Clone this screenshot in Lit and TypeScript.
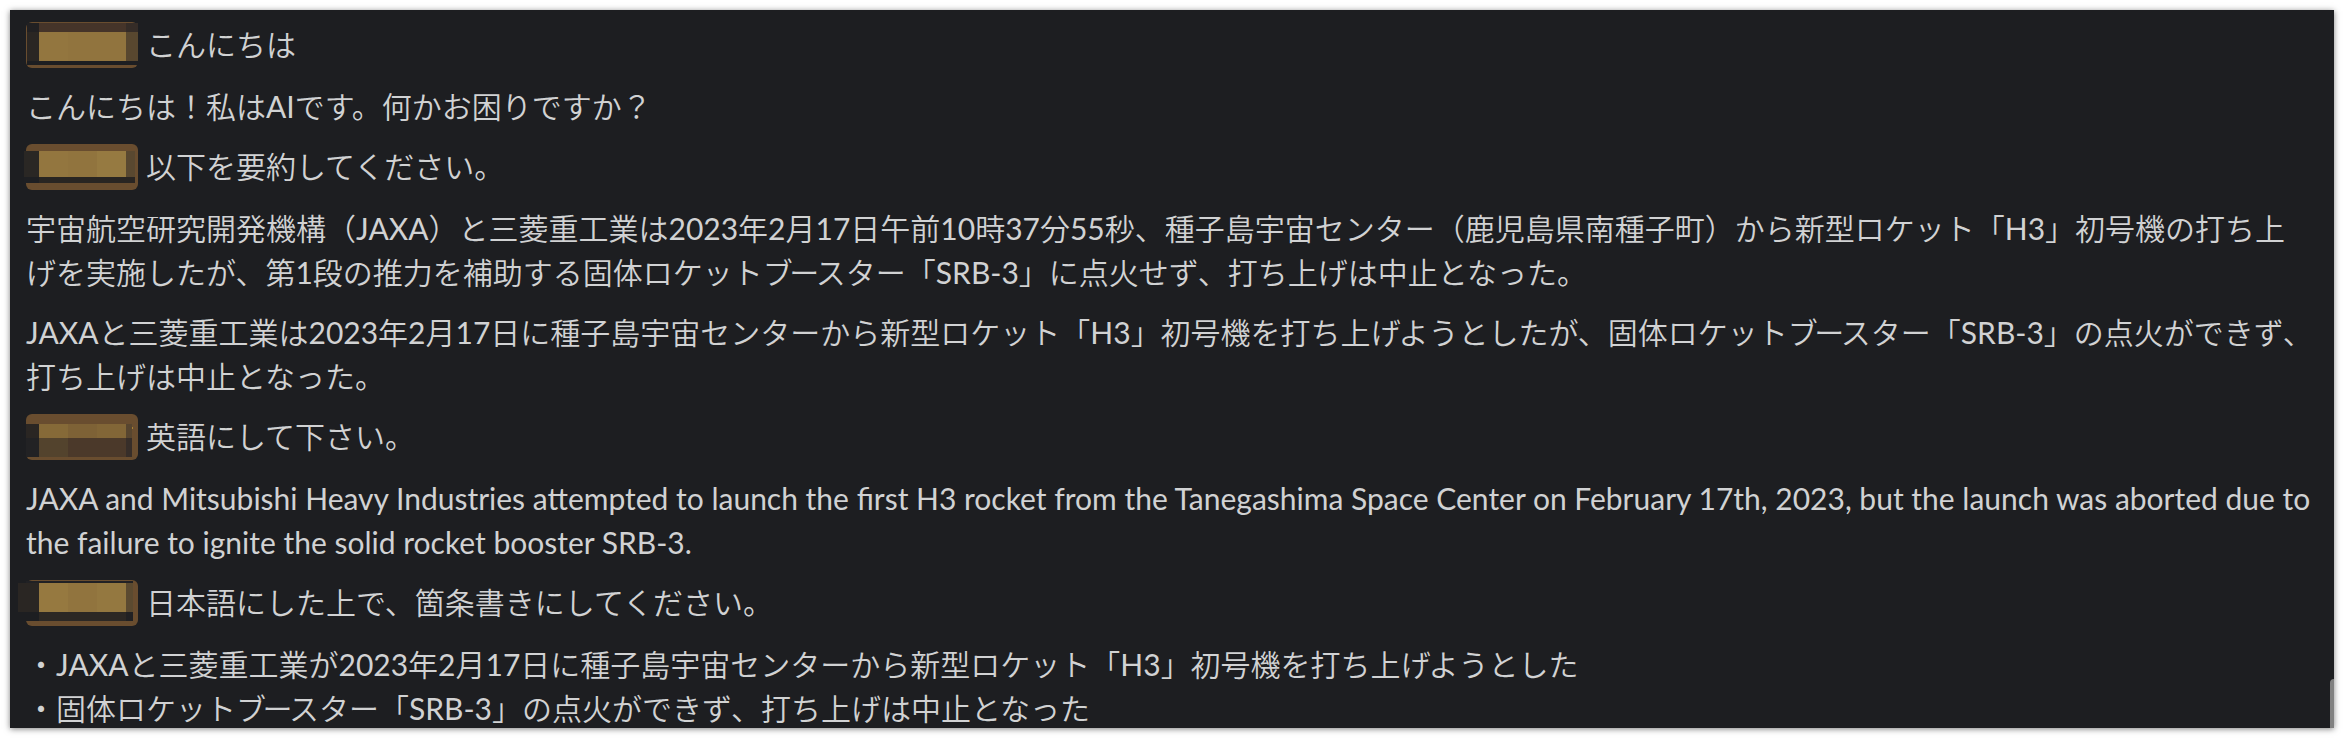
import { LitElement, html, css, svg } from "lit";
import { customElement, property } from "lit/decorators.js";

type Cell = [x: number, y: number, w: number, h: number, fill: string];

interface Message {
  mention?: Cell[];
  lines: string[];
}

const BG = "#1d1e21";
const GOLD = "#93763f";

// Pixelated user names, in the coordinates of a 112 x 46 mention chip.
const mosaicA: Cell[] = [
  [1, 1, 12, 9, "#212022"], [13, 1, 87, 9, "#453429"], [100, 1, 12, 9, "#352c27"],
  [1, 10, 12, 29, "#2a2623"], [13, 10, 29, 29, GOLD], [42, 10, 29, 29, "#91743e"],
  [71, 10, 29, 29, "#91743e"], [100, 10, 12, 29, "#58472f"], [1, 39, 111, 4, BG],
];
const mosaicB: Cell[] = [
  [-2, 7, 15, 26, "#2a2724"], [13, 7, 29, 26, GOLD], [42, 7, 29, 26, "#91743e"],
  [71, 7, 29, 26, "#967a41"], [100, 7, 9, 26, "#594830"],
  [-2, 33, 15, 6, "#1e1f22"], [13, 33, 96, 6, "#292522"],
];
const mosaicC: Cell[] = [
  [0, 10, 13, 14, "#2a2623"], [13, 10, 29, 14, "#866a38"], [42, 10, 29, 14, "#7e6236"],
  [71, 10, 29, 14, "#826637"], [100, 10, 6, 14, "#57452f"],
  [0, 24, 13, 19, "#222224"], [13, 24, 29, 19, "#53432d"], [42, 24, 58, 19, "#4b392a"],
  [100, 24, 6, 19, "#372e29"], [106, 13, 1, 2, "#a98132"],
];
const mosaicD: Cell[] = [
  [0, 1, 107, 2, "#212124"], [-8, 3, 21, 29, "#2a2623"], [13, 3, 29, 29, "#967940"],
  [42, 3, 29, 29, "#91743e"], [71, 3, 29, 29, "#947840"], [100, 3, 7, 29, "#5b4a30"],
  [-8, 32, 21, 9, BG], [13, 32, 87, 9, "#2c2824"], [100, 32, 7, 9, "#212123"],
];

const messages: Message[] = [
  { mention: mosaicA, lines: ["こんにちは"] },
  { lines: ["こんにちは！私はAIです。何かお困りですか？"] },
  { mention: mosaicB, lines: ["以下を要約してください。"] },
  {
    lines: [
      "宇宙航空研究開発機構（JAXA）と三菱重工業は2023年2月17日午前10時37分55秒、種子島宇宙センター（鹿児島県南種子町）から新型ロケット「H3」初号機の打ち上",
      "げを実施したが、第1段の推力を補助する固体ロケットブースター「SRB-3」に点火せず、打ち上げは中止となった。",
    ],
  },
  {
    lines: [
      "JAXAと三菱重工業は2023年2月17日に種子島宇宙センターから新型ロケット「H3」初号機を打ち上げようとしたが、固体ロケットブースター「SRB-3」の点火ができず、",
      "打ち上げは中止となった。",
    ],
  },
  { mention: mosaicC, lines: ["英語にして下さい。"] },
  {
    lines: [
      "JAXA and Mitsubishi Heavy Industries attempted to launch the first H3 rocket from the Tanegashima Space Center on February 17th, 2023, but the launch was aborted due to",
      "the failure to ignite the solid rocket booster SRB-3.",
    ],
  },
  { mention: mosaicD, lines: ["日本語にした上で、箇条書きにしてください。"] },
  {
    lines: [
      "・JAXAと三菱重工業が2023年2月17日に種子島宇宙センターから新型ロケット「H3」初号機を打ち上げようとした",
      "・固体ロケットブースター「SRB-3」の点火ができず、打ち上げは中止となった",
    ],
  },
];

// Splits a line into Latin and Japanese runs, and tightens the kana pairs
// that sit closer together than their full-width boxes.
function runs(line: string) {
  return line
    .split(/([^\x00-\x7f]+)/)
    .filter(Boolean)
    .map((run) =>
      run.charCodeAt(0) < 128
        ? run
        : html`<span class="ja">${run
            .split(/(ブ(?=ー)|ー(?=ス)|げ(?=よ)|ず(?=、))/)
            .filter(Boolean)
            .map((part) =>
              part === "ブ" || part === "ー"
                ? html`<span class="kern">${part}</span>`
                : part === "げ" || part === "ず"
                  ? html`<span class=${part === "げ" ? "kern-soft" : "kern-comma"}>${part}</span>`
                  : part
            )}</span>`
    );
}

@customElement("mention-chip")
class MentionChip extends LitElement {
  @property({ attribute: false }) cells: Cell[] = [];

  static styles = css`
    :host { display: block; width: 112px; height: 46px; }
    .chip { display: block; overflow: visible; }
  `;

  render() {
    return html`<svg class="chip" width="112" height="46" viewBox="0 0 112 46">
      <rect width="112" height="46" rx="6" fill="#694d2f"></rect>
      ${this.cells.map(([x, y, w, h, fill]) => svg`<rect x=${x} y=${y} width=${w} height=${h} fill=${fill} shape-rendering="crispEdges"></rect>`)}
    </svg>`;
  }
}

@customElement("app-root")
class AppRoot extends LitElement {
  static styles = css`
    :host {
      display: block;
      box-sizing: border-box;
      width: 2344px;
      height: 738px;
      padding: 10px;
      overflow: hidden;
      background: #fff;
    }
    .frame { width: 2324px; height: 718px; box-shadow: 0 1px 6px rgba(0, 0, 0, 0.5); }
    .panel {
      position: relative;
      box-sizing: border-box;
      display: flex;
      flex-direction: column;
      gap: 16px;
      height: 718px;
      padding: 12px 16px 0;
      overflow: hidden;
      background: #1d1e21;
      color: #d1d2d3;
      font: 400 30px/44px Lato, "Noto Sans CJK JP", sans-serif;
      text-spacing-trim: space-all;
    }
    .message { display: flex; flex: none; gap: 8px; }
    .line { height: 44px; white-space: nowrap; }
    .ja { font-family: "Noto Sans CJK JP", sans-serif; font-weight: 350; line-height: 1; }
    .kern { letter-spacing: -3.5px; }
    .kern-soft { letter-spacing: -2.2px; }
    .kern-comma { letter-spacing: -1px; }
    .scroll-thumb {
      position: absolute;
      right: 0;
      bottom: 0;
      width: 4px;
      height: 49px;
      border-top-left-radius: 5px;
      background: #808080;
    }
  `;

  render() {
    return html`<div class="frame"><main class="panel">
      ${messages.map((m) => html`<div class="message">
        ${m.mention ? html`<mention-chip .cells=${m.mention}></mention-chip>` : null}
        <div class="text">${m.lines.map((l) => html`<div class="line">${runs(l)}</div>`)}</div>
      </div>`)}
      <div class="scroll-thumb"></div>
    </main></div>`;
  }
}
